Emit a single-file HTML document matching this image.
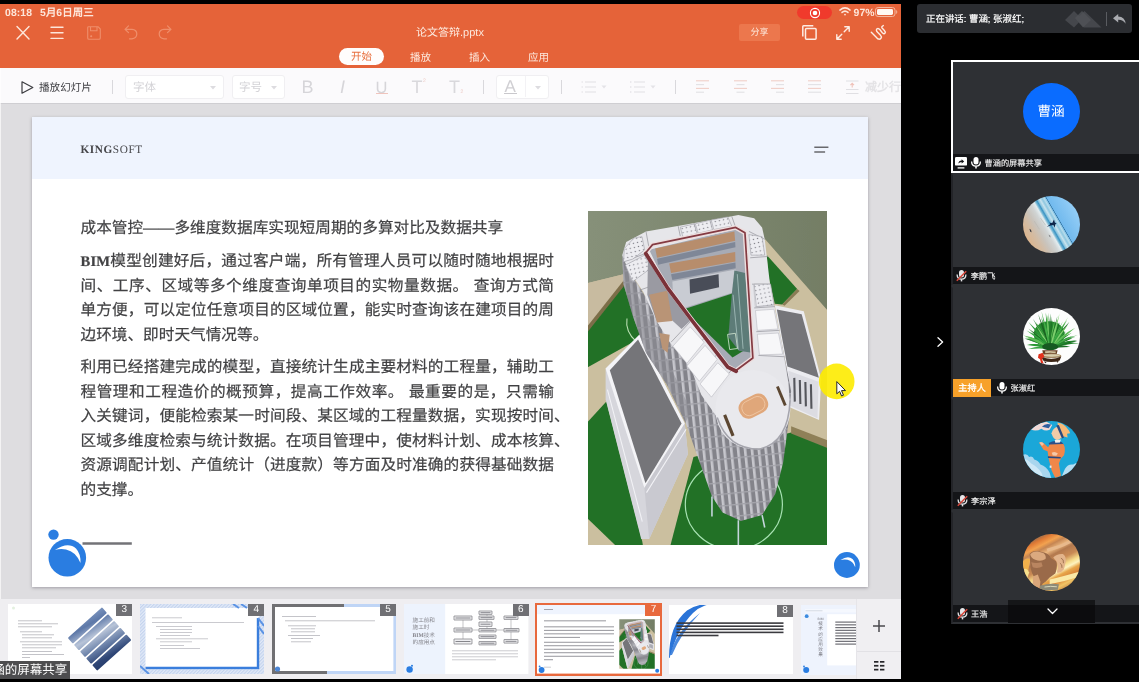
<!DOCTYPE html>
<html lang="zh-CN">
<head>
<meta charset="utf-8">
<title>论文答辩.pptx</title>
<style>
*{box-sizing:border-box;margin:0;padding:0}
html,body{width:1139px;height:682px;overflow:hidden;background:#000}
body{position:relative;font-family:"Liberation Sans",sans-serif;color:#fff;text-rendering:geometricPrecision}
.abs{position:absolute}
#wps,#talk,#plist{will-change:transform}
.nw{white-space:nowrap}
/* ---------- WPS (shared screen) ---------- */
#wps{position:absolute;left:0;top:4px;width:901px;height:675.4px;background:#dedde0;overflow:hidden}
#hdr{position:absolute;left:0;top:0;width:901px;height:64px;background:#e56339}
#tbar{position:absolute;left:0;top:64px;width:901px;height:36px;background:#fbfafc;border-bottom:1px solid #cfced2}
#slide{position:absolute;left:32px;top:113px;width:836.4px;height:470px;background:#fff;box-shadow:0 1px 3px rgba(100,98,108,.5)}
#shead{position:absolute;left:0;top:0;width:100%;height:62px;background:#eff4fe}
#strip{position:absolute;left:0;top:595px;width:901px;height:80px;background:#efeef1}

/* header */
#hdr .st{position:absolute;top:3.6px;font-size:10.4px;font-weight:bold;color:#fde6da;letter-spacing:.1px;line-height:11px;white-space:nowrap}
#hdr svg{position:absolute;overflow:visible}
#title{position:absolute;left:350px;width:200px;top:23.3px;text-align:center;font-size:11px;line-height:13px;color:#fdeadf;white-space:nowrap}
.tab{position:absolute;top:48.1px;font-size:10.5px;line-height:13px;color:#fdeadf;white-space:nowrap}
#tab1{position:absolute;left:339px;top:44px;width:45px;height:17px;border-radius:9px;background:#fffdfc;color:#e8703f;font-size:10.5px;line-height:19.4px;text-align:center}
#share{position:absolute;left:739px;top:20px;width:41px;height:17px;background:#ec774d;border-radius:2px;color:#fdeadf;font-size:9px;line-height:17px;text-align:center}
/* toolbar */
#tbar svg{position:absolute;overflow:visible}
#tbar .bx{position:absolute;top:7px;height:24px;background:#fff;border:1px solid #f0eff2;border-radius:3px}
#tbar .t{position:absolute;white-space:nowrap;line-height:14px}
#tbar .dv{position:absolute;top:12px;width:1px;height:14px;background:#d9d8dc}

/* slide content (coords relative to #slide: page x-32, y-117) */
#slide .ln{position:absolute;left:48.5px;width:473.5px;height:22px;font-size:15.65px;line-height:22px;color:#414143;-webkit-text-stroke:.2px #414143;white-space:nowrap;text-align:justify;text-align-last:justify;overflow:visible}
#slide .ln.l{text-align:left;text-align-last:left;width:auto}
#slide b.s{font-family:"Liberation Serif",serif;font-weight:bold;font-size:14.6px;letter-spacing:.15px}
#logo{position:absolute;left:48.5px;top:26.9px;font-family:"Liberation Serif",serif;font-size:11.3px;line-height:13px;color:#46464a;letter-spacing:.55px;white-space:nowrap}

/* thumbnails */
#strip svg{position:absolute;overflow:hidden}
.bdg{position:absolute;width:16px;height:12px;background:#707074;color:#fff;font-size:10px;line-height:12px;text-align:center}
#sharelbl{position:absolute;left:0;top:657px;width:70px;height:18.3px;background:#4d4d4f;color:#fff;font-size:12.5px;line-height:18.5px;white-space:nowrap;overflow:hidden}
#sharelbl span{position:absolute;left:-7.8px;top:0}
/* ---------- Meeting panel ---------- */
#talk span{position:absolute;left:9px;top:9.2px;font-size:9.45px;line-height:13px;color:#fff;-webkit-text-stroke:.2px #fff;white-space:nowrap}
#talk svg{position:absolute;overflow:visible}
.tile{position:absolute;left:0;width:189px;height:112.75px;background:#2e3034;border:2px solid #2e3034;border-left-color:#232428;border-right:0}
.tile.on{border-color:#fff}
.tile .nb{position:absolute;left:0;right:0;bottom:0;height:17px;background:#141518;font-size:8.2px;line-height:19.2px;color:#f2f2f2;white-space:nowrap}
.tile .nb svg{position:absolute;overflow:visible}
.tile .nb span{position:absolute;top:0;-webkit-text-stroke:.15px #f2f2f2}
.av{position:absolute;left:69.5px;top:20.8px;width:57px;height:57px;border-radius:50%;overflow:hidden}

#talk{position:absolute;left:917px;top:4px;width:215px;height:29px;background:#2b2d31;border-radius:3px}
#plist{position:absolute;left:950.6px;top:60.3px;width:189px;height:563.6px;background:#2d2f33;overflow:hidden}
</style>
</head>
<body>
<div id="wps">
  <div id="hdr">
    <span class="st" style="left:5px">08:18</span>
    <span class="st" style="left:40px">5月6日周三</span>
    <!-- close -->
    <svg style="left:16px;top:22px" width="14" height="14" viewBox="0 0 14 14" fill="none" stroke="#fde6da" stroke-width="1.4" stroke-linecap="round"><path d="M1 0.5 L13 13 M13 0.5 L1 13"/></svg>
    <!-- menu -->
    <svg style="left:50px;top:22px" width="14" height="14" viewBox="0 0 14 14" fill="none" stroke="#fde6da" stroke-width="1.4" stroke-linecap="round"><path d="M1 1.2 H13 M1 6.8 H13 M1 12.4 H13"/></svg>
    <!-- save (disabled) -->
    <svg style="left:87px;top:22px" width="14" height="14" viewBox="0 0 14 14" fill="none" stroke="#ef8e6b" stroke-width="1.1" stroke-linejoin="round"><path d="M1.5 0.7 H11 L13.3 3 V12 Q13.3 13.3 12 13.3 H2 Q0.7 13.3 0.7 12 V1.5 Q0.7 0.7 1.5 0.7 Z M3.5 0.7 V4.8 H10 V0.7"/><circle cx="4.2" cy="10.3" r=".5" fill="#ef8e6b"/></svg>
    <!-- undo (disabled) -->
    <svg style="left:124px;top:21px" width="14" height="15" viewBox="0 0 14 15" fill="none" stroke="#ef8e6b" stroke-width="1.2" stroke-linecap="round" stroke-linejoin="round"><path d="M4.5 0.8 L1 4.3 L4.5 7.6 M1.2 4.3 H8 Q12.8 4.6 12.8 9 Q12.6 13.4 8 13.8 H5.5"/></svg>
    <!-- redo (disabled) -->
    <svg style="left:158px;top:21px" width="14" height="15" viewBox="0 0 14 15" fill="none" stroke="#ef8e6b" stroke-width="1.2" stroke-linecap="round" stroke-linejoin="round"><path d="M9.5 0.8 L13 4.3 L9.5 7.6 M12.8 4.3 H6 Q1.2 4.6 1.2 9 Q1.4 13.4 6 13.8 H8.5"/></svg>
    <div id="title">论文答辩.pptx</div>
    <div id="tab1">开始</div>
    <span class="tab" style="left:410px">播放</span>
    <span class="tab" style="left:469px">插入</span>
    <span class="tab" style="left:528px">应用</span>
    <!-- recording pill -->
    <div class="abs" style="left:797px;top:2px;width:35px;height:12.5px;border-radius:7px;background:#f03a2c"></div>
    <svg style="left:809px;top:2.5px" width="12" height="12" viewBox="0 0 12 12"><circle cx="6" cy="6" r="4.6" fill="none" stroke="#fff" stroke-width="1.1"/><circle cx="6" cy="6" r="2.3" fill="#fff"/></svg>
    <!-- wifi -->
    <svg style="left:839px;top:3.3px" width="12" height="9" viewBox="0 0 12 9" fill="none" stroke="#fde6da" stroke-width="1.5" stroke-linecap="round"><path d="M0.9 3.1 Q6 -1.4 11.1 3.1"/><path d="M3 5.4 Q6 2.8 9 5.4"/><circle cx="6" cy="7.6" r=".9" fill="#fde6da" stroke="none"/></svg>
    <span class="st" style="left:853.5px">97%</span>
    <!-- battery -->
    <svg style="left:875px;top:2.9px" width="23" height="10" viewBox="0 0 23 10"><rect x=".5" y=".5" width="19.5" height="9" rx="2.6" fill="none" stroke="#f4b69d" stroke-width="1"/><rect x="2" y="2" width="16" height="6" rx="1.4" fill="#fff8f3"/><path d="M21.3 3.4 Q22.4 5 21.3 6.6" stroke="#f4b69d" stroke-width="1" fill="none"/></svg>
    <div id="share">分享</div>
    <!-- copy -->
    <svg style="left:802px;top:21px" width="15" height="15" viewBox="0 0 15 15" fill="none" stroke="#fdece3" stroke-width="1.5" stroke-linejoin="round"><path d="M0.8 11.5 V1.6 Q0.8 .8 1.6 .8 H11.3"/><rect x="3.5" y="3.4" width="10.6" height="10.8" rx="1"/></svg>
    <!-- expand -->
    <svg style="left:836px;top:21.5px" width="14" height="14" viewBox="0 0 14 14" fill="none" stroke="#fdece3" stroke-width="1.4" stroke-linecap="round" stroke-linejoin="round"><path d="M8.8 .8 H13.2 V5.2 M13 1 L8.2 5.8 M5.2 13.2 H.8 V8.8 M1 13 L5.8 8.2"/></svg>
    <!-- pen -->
    <svg style="left:871px;top:21px" width="15" height="15" viewBox="0 0 15 15" fill="none" stroke="#fdece3" stroke-width="1.4" stroke-linecap="round" stroke-linejoin="round"><path d="M.3 7.3 L6 13.1 Q8.4 15.2 10 13.2 Q11 11.8 9.3 10 L6.6 7.3 Q4.6 5 6 3.8 Q7.4 2.8 9 4.8 L11.3 7.8 Q13 9.6 14 8.2 Q14.8 6.8 13 5 L11 2.9 Q10.2 1.6 12.3 .6"/></svg>
  </div>
  <div id="tbar">
    <svg style="left:20.5px;top:12.6px" width="13" height="13" viewBox="0 0 13 13" fill="none" stroke="#3c3c40" stroke-width="1.2" stroke-linejoin="round"><path d="M1 .8 L11.8 6.5 L1 12.2 Z"/></svg>
    <span class="t" style="left:39px;top:13.4px;font-size:10.6px;color:#3f3f43">播放幻灯片</span>
    <div class="dv" style="left:112px"></div>
    <div class="bx" style="left:125px;width:99px"></div>
    <span class="t" style="left:133px;top:13.3px;font-size:11.5px;color:#d3d2d6">字体</span>
    <svg style="left:210px;top:17.5px" width="6" height="4" viewBox="0 0 6 4"><path d="M0 0 H6 L3 3.6 Z" fill="#dddce0"/></svg>
    <div class="bx" style="left:232px;width:53px"></div>
    <span class="t" style="left:239px;top:13.3px;font-size:11.5px;color:#d3d2d6">字号</span>
    <svg style="left:271px;top:17.5px" width="6" height="4" viewBox="0 0 6 4"><path d="M0 0 H6 L3 3.6 Z" fill="#dddce0"/></svg>
    <span class="t" style="left:301.5px;top:10px;font-size:18px;line-height:18px;color:#d6d5d9">B</span>
    <span class="t" style="left:340px;top:10px;font-size:18px;line-height:18px;color:#d6d5d9;font-style:italic">I</span>
    <span class="t" style="left:375.5px;top:10.5px;font-size:16.5px;line-height:18px;color:#d6d5d9">U</span>
    <div class="abs" style="left:375.5px;top:24.5px;width:12px;height:1px;background:#efc4bd"></div>
    <span class="t" style="left:411.5px;top:10px;font-size:18px;line-height:18px;color:#d9d8dc">T</span>
    <span class="t" style="left:423px;top:10px;font-size:5px;line-height:6px;color:#ecc9c3">2</span>
    <span class="t" style="left:449px;top:10px;font-size:18px;line-height:18px;color:#d9d8dc">T</span>
    <span class="t" style="left:460.5px;top:21px;font-size:5px;line-height:6px;color:#ecc9c3">2</span>
    <div class="dv" style="left:483px"></div>
    <div class="bx" style="left:496px;width:53px"></div>
    <div class="abs" style="left:525px;top:8px;width:1px;height:21px;background:#f3f2f5"></div>
    <span class="t" style="left:504.5px;top:9.5px;font-size:17px;line-height:18px;color:#d0cfd3">A</span>
    <div class="abs" style="left:504px;top:24.5px;width:13px;height:1.5px;background:#c9c8cc"></div>
    <svg style="left:535px;top:17.5px" width="6" height="4" viewBox="0 0 6 4"><path d="M0 0 H6 L3 3.6 Z" fill="#dddce0"/></svg>
    <div class="dv" style="left:561px"></div>
    <!-- bullet list -->
    <svg style="left:581px;top:12px" width="26" height="14" viewBox="0 0 26 14" stroke="#e1e0e4" stroke-width="1.2" fill="none"><path d="M4 2 H15 M4 7 H15 M4 12 H15"/><path d="M.5 2 H2 M.5 7 H2 M.5 12 H2"/><path d="M20.5 5.5 H25.5 L23 8.5 Z" fill="#e4e3e7" stroke="none"/></svg>
    <!-- numbered list -->
    <svg style="left:630px;top:12px" width="26" height="14" viewBox="0 0 26 14" stroke="#e1e0e4" stroke-width="1.2" fill="none"><path d="M4 2 H15 M4 7 H15 M4 12 H15"/><path d="M.8 1 V3 M.8 6 V8 M.8 11 V13" stroke-width=".9"/><path d="M20.5 5.5 H25.5 L23 8.5 Z" fill="#e4e3e7" stroke="none"/></svg>
    <div class="dv" style="left:675px"></div>
    <!-- align icons -->
    <svg style="left:696px;top:12.4px" width="14" height="13" viewBox="0 0 14 13" fill="none" stroke-width="1.1"><path d="M0 .8 H13" stroke="#f1cfc8"/><path d="M0 4.6 H8" stroke="#e2e1e5"/><path d="M0 8.4 H13" stroke="#f1cfc8"/><path d="M0 12.2 H8" stroke="#e2e1e5"/></svg>
    <svg style="left:734px;top:12.4px" width="14" height="13" viewBox="0 0 14 13" fill="none" stroke-width="1.1"><path d="M0 .8 H13" stroke="#f1cfc8"/><path d="M2.5 4.6 H10.5" stroke="#e2e1e5"/><path d="M0 8.4 H13" stroke="#f1cfc8"/><path d="M2.5 12.2 H10.5" stroke="#e2e1e5"/></svg>
    <svg style="left:771px;top:12.4px" width="14" height="13" viewBox="0 0 14 13" fill="none" stroke-width="1.1"><path d="M0 .8 H13" stroke="#f1cfc8"/><path d="M5 4.6 H13" stroke="#e2e1e5"/><path d="M0 8.4 H13" stroke="#f1cfc8"/><path d="M5 12.2 H13" stroke="#e2e1e5"/></svg>
    <svg style="left:808px;top:12.4px" width="14" height="13" viewBox="0 0 14 13" fill="none" stroke-width="1.1"><path d="M0 .8 H13" stroke="#f1cfc8"/><path d="M0 4.6 H13" stroke="#e2e1e5"/><path d="M0 8.4 H13" stroke="#f1cfc8"/><path d="M0 12.2 H13" stroke="#e2e1e5"/></svg>
    <svg style="left:846px;top:12px" width="13" height="15" viewBox="0 0 13 15" fill="none" stroke-width="1.1"><path d="M0 1 H12.5 M0 9.5 H12.5 M0 13.5 H12.5" stroke="#e0dfe3"/><path d="M6.2 7.5 V3.6 M4.4 5.2 L6.2 3.4 L8 5.2" stroke="#f0c2b9"/></svg>
    <span class="t" style="left:865px;top:12.2px;font-size:12px;color:#e4e3e6;font-weight:bold">减少行</span>
  </div>
  <div id="slide"><div id="shead"></div>
    <div id="logo"><b>KING</b>SOFT</div>
    <svg class="abs" style="left:782px;top:28px" width="16" height="10" viewBox="0 0 16 10" stroke="#68686d" stroke-width="1.4" fill="none"><path d="M.3 2.2 H14.4 M.3 7 H11.1"/></svg>
    <div class="ln" style="top:100.80px;width:422.6px">成本管控——多维度数据库实现短周期的多算对比及数据共享</div>
    <div class="ln" style="top:134.30px"><b class="s">BIM</b>模型创建好后，通过客户端，所有管理人员可以随时随地根据时</div>
    <div class="ln" style="top:158.75px">间、工序、区域等多个维度查询单项目的实物量数据。 查询方式简</div>
    <div class="ln" style="top:183.20px">单方便，可以定位任意项目的区域位置，能实时查询该在建项目的周</div>
    <div class="ln" style="top:207.65px;width:187.8px">边环境、即时天气情况等。</div>
    <div class="ln" style="top:240.45px">利用已经搭建完成的模型，直接统计生成主要材料的工程量，辅助工</div>
    <div class="ln" style="top:264.90px">程管理和工程造价的概预算，提高工作效率。 最重要的是，只需输</div>
    <div class="ln" style="top:289.35px;width:489.2px">入关键词，便能检索某一时间段、某区域的工程量数据，实现按时间、</div>
    <div class="ln" style="top:313.80px;width:489.2px">区域多维度检索与统计数据。在项目管理中，使材料计划、成本核算、</div>
    <div class="ln" style="top:338.25px">资源调配计划、产值统计（进度款）等方面及时准确的获得基础数据</div>
    <div class="ln" style="top:362.70px;width:62.6px">的支撑。</div>
    <svg class="abs" style="left:556px;top:94px" width="239" height="334" viewBox="0 0 239 334">
      <defs>
        <linearGradient id="gbg" x1="0" y1="0" x2="1" y2="0"><stop offset="0" stop-color="#87917a"/><stop offset="1" stop-color="#737d64"/></linearGradient>
        <pattern id="fac" width="26" height="44" patternUnits="userSpaceOnUse" patternTransform="rotate(-6)"><rect width="26" height="44" fill="#83838a"/><rect x="0" width="10" height="44" fill="#c6c6cc"/><rect y="0" width="26" height="5" fill="#a4a4ab"/></pattern>
        <pattern id="dots" width="16" height="16" patternUnits="userSpaceOnUse" patternTransform="rotate(-12)"><rect width="16" height="16" fill="#ededf1"/><circle cx="8" cy="8" r="2.6" fill="#77777f"/></pattern><filter id="soft" x="-2%" y="-2%" width="104%" height="104%"><feGaussianBlur stdDeviation="0.55"/></filter>
        <clipPath id="cimg"><rect width="239" height="334"/></clipPath>
      </defs>
      <g id="bld" clip-path="url(#cimg)"><g filter="url(#soft)"><g transform="translate(-8 -6) scale(.2639)">
        <rect x="0" y="0" width="970" height="1320" fill="url(#gbg)"/>
        <!-- beige ground -->
        <polygon points="20,298 165,262 430,160 700,128 940,402 940,1300 20,1300" fill="#cbbf9f"/>
        <polygon points="20,298 165,262 165,300 20,475" fill="#c8bba0"/>
        <!-- lawns -->
        <polygon points="20,482 168,296 232,500 215,512 20,620" fill="#227127"/>
        <polygon points="20,470 166,285 172,300 20,492" fill="#7d6e49"/>
        <path d="M178 430 Q170 480 215 520" stroke="#bfe3b6" stroke-width="4" fill="none"/>
        <polygon points="708,190 823,318 766,377 738,374 712,262" fill="#227127"/>
        <polygon points="823,318 766,377 775,382 832,326" fill="#8a7b55"/>
        <!-- lower lawns -->
        <polygon points="20,832 100,745 236,1275 240,1300 20,1300" fill="#227127"/>
        <polygon points="430,955 800,862 940,915 940,1300 340,1300" fill="#227127"/>
        <polygon points="800,838 940,892 940,922 800,866" fill="#8f8058"/>
        <polygon points="20,1180 145,1300 20,1300" fill="#cbbf9f"/>
        <ellipse cx="583" cy="1135" rx="184" ry="170" fill="none" stroke="#a9e3b4" stroke-width="4.5"/>
        <!-- right annex: white border, gray roof, columns facade -->
        <polygon points="738,380 848,403 914,660 906,815 792,765 782,615" fill="#ececf0"/>
        <polygon points="746,396 840,414 905,655 786,612" fill="#757579"/>
        <polygon points="790,628 904,670 900,808 794,760" fill="#dcdce2"/>
        <path d="M812 655 L814 745 M833 663 L835 754 M854 671 L856 763 M875 679 L877 772" stroke="#55565c" stroke-width="8"/>
        <!-- left annex -->
        <polygon points="97,620 97,736 232,1266 262,1266 409,944 397,828 226,491" fill="#d6d6dc"/>
        <polygon points="97,620 226,491 397,828 244,1072" fill="#f4f4f7"/>
        <polygon points="113,626 220,510 385,828 248,1054" fill="#757579"/>
        <polygon points="244,1072 397,828 409,944 262,1266" fill="#c9c9d0"/>
        <path d="M104 700 L236 1200 M252 1090 L402 850" stroke="#f2f2f6" stroke-width="4" fill="none"/>
        <!-- main building facade -->
        <polygon points="160,190 165,300 200,420 250,560 330,682 400,825 450,965 500,1105 540,1165 610,1197 690,1175 740,1095 770,975 790,825 800,705 760,500 420,620 180,240" fill="url(#fac)"/>
        <polygon points="160,190 165,300 200,420 250,560 330,682 400,825 420,780 300,520 200,300" fill="#8a8a91" opacity=".55"/>
        <path d="M500 1105 V1180 M600 1195 V1300 M690 1175 L700 1222" stroke="#c5d6dc" stroke-width="6"/>
        <!-- roof ring -->
        <polygon points="160,190 175,140 250,100 370,80 560,45 600,38 660,50 690,85 700,130 720,300 760,500 790,675 795,755 770,855 720,915 640,925 580,885 520,805 460,720 420,620 340,520 290,440 240,330 180,240" fill="#e6e6ea"/>
        <!-- roof slab lines -->
        <g stroke="#9c9ca3" stroke-width="3" fill="none">
          <path d="M372 80 L380 118 M432 68 L440 106 M492 57 L500 95 M575 43 L590 85"/>
          <path d="M250 100 L262 165 M165 215 L245 185 M190 262 L275 225 M228 322 L320 290"/>
          <path d="M640 100 L700 130 M645 200 L712 195 M652 300 L722 300 M660 390 L738 385 M668 480 L756 475 M676 570 L775 575"/>
          <path d="M345 520 L420 440 M395 590 L475 500 M440 650 L525 560 M490 720 L575 625"/>
        </g>
        <g fill="#f7f7f9" stroke="#b5b5bc" stroke-width="2">
          <polygon points="352,535 418,462 470,520 405,600"/>
          <polygon points="405,610 474,532 520,585 452,668"/>
          <polygon points="455,678 522,598 566,640 498,728"/>
          <polygon points="665,400 735,395 750,470 672,475"/>
          <polygon points="672,490 752,485 768,565 680,568"/>
          <polygon points="658,305 722,305 733,380 664,385"/>
        </g>
        <g fill="url(#dots)" stroke="#a5a5ad" stroke-width="2.5">
          <polygon points="380,84 432,72 444,108 390,122"/><polygon points="437,71 492,58 502,94 448,107"/><polygon points="497,57 560,45 575,80 507,93"/>
          <polygon points="168,165 205,125 235,120 245,170 200,205 165,215"/><polygon points="172,228 245,190 268,240 200,290"/>
          <polygon points="640,112 690,120 700,190 648,190"/><polygon points="660,300 722,300 735,378 668,385"/>
        </g>
        <!-- courtyard interior -->
        <polygon points="262,170 590,92 628,110 655,580 590,625 560,612 420,430 330,310" fill="#a7abb5"/>
        <polygon points="285,165 585,100 588,135 292,200" fill="#b78d6c"/>
        <polygon points="292,204 588,140 589,160 296,226" fill="#7f8797"/>
        <polygon points="338,222 588,178 589,214 345,258" fill="#b78d6c"/>
        <polygon points="345,262 589,218 590,240 350,284" fill="#7f8797"/>
        <polygon points="350,290 590,244 585,330 400,388 352,330" fill="#c9ccd3"/>
        <polygon points="415,282 525,262 527,312 417,336" fill="#4a4e58"/>
        <polygon points="258,185 330,305 400,390 425,432 385,470 330,420 290,440 255,340" fill="#9a9aa2"/>
        <polygon points="262,340 330,325 350,440 292,445" fill="#b99476"/>
        <polygon points="300,485 340,492 332,560 312,545" fill="#b99476"/>
        <polygon points="402,392 580,334 640,540 578,578 425,428" fill="#227127"/>
        <polygon points="585,248 626,258 652,560 602,552 562,500 576,330" fill="#5d7b78"/>
        <path d="M596 262 L618 545 M580 340 L600 548" stroke="#a9c3bf" stroke-width="3"/>
        <rect x="563" y="488" width="30" height="58" fill="none" stroke="#cfe3cf" stroke-width="3" transform="rotate(-8 578 517)"/>
        <!-- red parapet -->
        <polygon points="250,180 275,150 590,85 625,105 655,580 590,628 560,612 420,430 330,310" fill="none" stroke="#eddede" stroke-width="17" stroke-linejoin="round"/>
        <polygon points="250,180 275,150 590,85 625,105 655,580 590,628 560,612 420,430 330,310" fill="none" stroke="#843a43" stroke-width="6.5" stroke-linejoin="round"/>
        <path d="M249 184 L330 312 L420 432 L560 614 L592 630" fill="none" stroke="#7a3039" stroke-width="14" stroke-linejoin="round" stroke-linecap="round"/>
        <!-- drum roof -->
        <ellipse cx="655" cy="775" rx="142" ry="150" fill="#e9e9ed"/>
        <rect x="600" y="724" width="114" height="76" rx="34" fill="#e0a77a" transform="rotate(-27 657 762)"/><rect x="612" y="734" width="90" height="56" rx="26" fill="none" stroke="#f0c9a6" stroke-width="3" transform="rotate(-27 657 762)"/>
        <path d="M548 795 L580 875" stroke="#5b4630" stroke-width="12"/>
        <path d="M748 688 L778 760" stroke="#5b4630" stroke-width="11"/>
        <path d="M520 805 Q560 925 680 925 Q790 900 796 740" stroke="#a5a5ad" stroke-width="6" fill="none"/>
      </g></g></g>
    </svg>
    <!-- cursor highlight -->
    <svg class="abs" style="left:786px;top:246px;overflow:visible" width="38" height="38" viewBox="0 0 38 38"><circle cx="18.7" cy="18.4" r="17.8" fill="rgba(253,235,0,.9)"/><path d="M18.8 18.6 V30.8 L21.6 28.3 L23.6 33 L25.5 32.2 L23.5 27.6 H27.5 Z" fill="#fff" stroke="#2a2a2a" stroke-width="1" stroke-linejoin="round"/></svg>
    <!-- decorations -->
    <svg class="abs" style="left:14px;top:410px" width="90" height="54" viewBox="0 0 90 54">
      <path d="M36.5 16.5 H85.8" stroke="#737377" stroke-width="2.3"/>
      <circle cx="7.5" cy="7.6" r="5.2" fill="#2a7de1"/>
      <circle cx="21.3" cy="30.8" r="18.8" fill="#2a7de1"/>
      <path d="M8.9 23 Q22 14.3 30 21.5 Q35 27 34.5 36.1 Q30 24.5 20 22.4 Q14 21.4 8.9 23 Z" fill="#fff"/>
    </svg>
    <svg class="abs" style="left:801px;top:434px" width="28" height="28" viewBox="0 0 28 28">
      <circle cx="13.9" cy="14" r="12.9" fill="#2a7de1"/>
      <path d="M7.5 9.1 Q15 3.8 19.5 8 Q22.6 11.5 22.2 16.2 Q20 10 14.5 8.8 Q11 8.2 7.5 9.1 Z" fill="#fff"/>
    </svg>
  </div>
  <div class="abs" style="left:0;top:64px;width:1.2px;height:593px;background:rgba(255,255,255,.65)"></div>
  <div id="strip">
    <svg style="left:8px;top:5.3px" width="124.4" height="70" viewBox="0 0 124.4 70"><defs><linearGradient id="mtn" x1="0" y1="0" x2=".6" y2="1"><stop offset="0" stop-color="#c9d6ea"/><stop offset=".22" stop-color="#8fa6cc"/><stop offset=".4" stop-color="#5d78a8"/><stop offset=".55" stop-color="#b8c4d8"/><stop offset=".7" stop-color="#6e84ab"/><stop offset=".85" stop-color="#2f4676"/><stop offset="1" stop-color="#1f3563"/></linearGradient><clipPath id="dia" transform="translate(91.6 35) rotate(-42)"><rect x="-23" y="-22" width="46" height="7.6" rx="1"/><rect x="-23" y="-12.9" width="46" height="7.6" rx="1"/><rect x="-23" y="-3.8" width="46" height="7.6" rx="1"/><rect x="-23" y="5.3" width="46" height="7.6" rx="1"/><rect x="-23" y="14.4" width="46" height="7.6" rx="1"/></clipPath></defs><rect width="124.4" height="70" fill="#fff"/><rect x="50" y="0" width="74.4" height="70" fill="url(#mtn)" clip-path="url(#dia)"/><rect x="4" y="2.5" width="3" height="3" rx="1.5" fill="#e3f0df"/><rect x="10" y="16.5" width="24" height="0.7" fill="#a9a9b0"/><rect x="10" y="19.5" width="40" height="0.7" fill="#a9a9b0"/><rect x="10" y="22.5" width="34" height="0.7" fill="#a9a9b0"/><rect x="12" y="27.5" width="22" height="0.7" fill="#a9a9b0"/><rect x="14" y="30.5" width="32" height="0.7" fill="#a9a9b0"/><rect x="14" y="33.5" width="30" height="0.7" fill="#a9a9b0"/><rect x="12" y="37.5" width="42" height="0.7" fill="#a9a9b0"/><rect x="14" y="40.5" width="40" height="0.7" fill="#a9a9b0"/><rect x="14" y="43.5" width="34" height="0.7" fill="#a9a9b0"/><rect x="14" y="47" width="30" height="0.7" fill="#a9a9b0"/><rect x="14" y="50" width="42" height="0.7" fill="#a9a9b0"/><rect x="14" y="53" width="8" height="0.7" fill="#a9a9b0"/></svg><div class="bdg" style="left:116.4px;top:5.3px">3</div>
    <svg style="left:140.3px;top:5.3px" width="124" height="70" viewBox="0 0 124 70"><defs><pattern id="hat" width="2.4" height="2.4" patternUnits="userSpaceOnUse" patternTransform="rotate(45)"><rect width="2.4" height="2.4" fill="#e1e9f7"/><rect width="1.1" height="2.4" fill="#c3d3ee"/></pattern></defs><rect width="124" height="70" fill="url(#hat)"/><rect x="5.5" y="4" width="113.5" height="61.5" fill="#fff"/><path d="M5.5 64 H119 M118 14 V65" stroke="#3a7edc" stroke-width="2.4" fill="none"/><path d="M93 0 l6 4 M101 0 l6 4 M0 62 l9 8 M118 14 l6 8 M118 22 l6 8" stroke="#5b93e4" stroke-width="2"/><rect x="12" y="13.5" width="30" height="0.7" fill="#b3b3ba"/><rect x="12" y="18" width="92" height="0.7" fill="#b3b3ba"/><rect x="16" y="22" width="36" height="0.7" fill="#b3b3ba"/><rect x="20" y="25" width="32" height="0.7" fill="#b3b3ba"/><rect x="20" y="28" width="32" height="0.7" fill="#b3b3ba"/><rect x="20" y="31" width="30" height="0.7" fill="#b3b3ba"/><rect x="16" y="34.5" width="52" height="0.7" fill="#b3b3ba"/><rect x="20" y="37.5" width="32" height="0.7" fill="#b3b3ba"/><rect x="20" y="41" width="24" height="0.7" fill="#b3b3ba"/><rect x="20" y="44" width="40" height="0.7" fill="#b3b3ba"/></svg><div class="bdg" style="left:248.3px;top:5.3px">4</div>
    <svg style="left:271.6px;top:5.3px" width="124.4" height="70" viewBox="0 0 124.4 70"><rect width="124.4" height="70" fill="#bfd5f6"/><path d="M0 0 H72 V3 H3 V67 H55 V70 H0 Z" fill="#707073"/><rect x="3" y="3" width="118.4" height="64" fill="#fff"/><circle cx="5.5" cy="65" r="2.6" fill="#4c86d6"/><rect x="10" y="12" width="34" height="0.7" fill="#ababb2"/><rect x="13" y="16.5" width="90" height="0.7" fill="#ababb2"/><rect x="16" y="21.5" width="28" height="0.7" fill="#ababb2"/><rect x="19" y="24.5" width="24" height="0.7" fill="#ababb2"/><rect x="19" y="27.5" width="24" height="0.7" fill="#ababb2"/><rect x="16" y="31" width="32" height="0.7" fill="#ababb2"/><rect x="19" y="34" width="22" height="0.7" fill="#ababb2"/><rect x="19" y="37.5" width="20" height="0.7" fill="#ababb2"/></svg><div class="bdg" style="left:380px;top:5.3px">5</div>
    <svg style="left:404.4px;top:5.3px" width="124.4" height="70" viewBox="0 0 124.4 70"><rect width="124.4" height="70" fill="#fff"/><rect width="41.2" height="70" fill="#edf3fd"/><g font-family="Liberation Sans, sans-serif" font-size="5.6" fill="#85858c"><text x="8.6" y="18">施工前和</text><text x="8.6" y="25.2">施工时</text><text x="8.6" y="32.6" font-family="Liberation Serif, serif" font-weight="bold">BIM<tspan font-family="Liberation Sans, sans-serif" font-weight="normal">技术</tspan></text><text x="8.6" y="39.8">的应用点</text></g><circle cx="5.6" cy="65.5" r="3.2" fill="#2a7de1"/><circle cx="8" cy="61.8" r="1" fill="#2a7de1"/><g fill="#f1f1f3" stroke="#5f5f66" stroke-width=".6"><rect x="50" y="12" width="18" height="4" rx=".2"/><path d="M51.5 14.0 H66.5" stroke="#55555b" stroke-width=".7"/><rect x="50" y="24" width="18" height="4" rx=".2"/><path d="M51.5 26.0 H66.5" stroke="#55555b" stroke-width=".7"/><rect x="50" y="35" width="18" height="5" rx=".2"/><path d="M51.5 37.5 H66.5" stroke="#55555b" stroke-width=".7"/><rect x="75" y="7" width="13" height="3.4" rx=".2"/><path d="M76.5 8.7 H86.5" stroke="#55555b" stroke-width=".7"/><rect x="75" y="12" width="15" height="3.4" rx=".2"/><path d="M76.5 13.7 H88.5" stroke="#55555b" stroke-width=".7"/><rect x="75" y="18" width="13" height="4.4" rx=".2"/><path d="M76.5 20.2 H86.5" stroke="#55555b" stroke-width=".7"/><rect x="75" y="24.5" width="17" height="3.4" rx=".2"/><path d="M76.5 26.2 H90.5" stroke="#55555b" stroke-width=".7"/><rect x="75" y="31" width="17" height="3.4" rx=".2"/><path d="M76.5 32.7 H90.5" stroke="#55555b" stroke-width=".7"/><rect x="75" y="37.5" width="17" height="3.4" rx=".2"/><path d="M76.5 39.2 H90.5" stroke="#55555b" stroke-width=".7"/><rect x="100" y="12" width="14" height="3.4" rx=".2"/><path d="M101.5 13.7 H112.5" stroke="#55555b" stroke-width=".7"/><rect x="100" y="24.5" width="15" height="3.4" rx=".2"/><path d="M101.5 26.2 H113.5" stroke="#55555b" stroke-width=".7"/><rect x="100" y="35.5" width="14" height="3.6" rx=".2"/><path d="M101.5 37.3 H112.5" stroke="#55555b" stroke-width=".7"/></g><path d="M59 16 V24 M59 28 V35 M68 26 H75 M92 26 H100 M83 10.4 V12 M83 15.4 V18 M83 22.4 V24.5 M107 15.4 V24.5 M107 28 V35.5" stroke="#8a8a90" stroke-width=".5" fill="none"/><rect x="48" y="46.5" width="66" height="0.7" fill="#b5b5bb"/><rect x="48" y="49.5" width="66" height="0.7" fill="#b5b5bb"/><rect x="48" y="52.5" width="66" height="0.7" fill="#b5b5bb"/><rect x="48" y="55.5" width="44" height="0.7" fill="#b5b5bb"/></svg><div class="bdg" style="left:512.8px;top:5.3px">6</div>
    <div class="abs" style="left:534.7px;top:4px;width:127.6px;height:73px;background:#e8693d"></div><svg style="left:536.9px;top:6.2px" width="123.2" height="68.6" viewBox="0 0 123.2 68.6"><rect width="123.2" height="68.6" fill="#fff"/><rect width="123.2" height="9.2" fill="#eff4fe"/><rect x="7" y="4" width="9" height=".9" fill="#9a9aa2"/><rect x="7" y="15.4" width="62" height="0.9" fill="#8b8b92"/><rect x="7" y="21.4" width="70" height="0.9" fill="#8b8b92"/><rect x="7" y="24.9" width="70" height="0.9" fill="#8b8b92"/><rect x="7" y="28.4" width="70" height="0.9" fill="#8b8b92"/><rect x="7" y="31.9" width="36" height="0.9" fill="#8b8b92"/><rect x="7" y="36.8" width="70" height="0.9" fill="#8b8b92"/><rect x="7" y="40.3" width="70" height="0.9" fill="#8b8b92"/><rect x="7" y="43.8" width="70" height="0.9" fill="#8b8b92"/><rect x="7" y="47.3" width="70" height="0.9" fill="#8b8b92"/><rect x="7" y="50.8" width="70" height="0.9" fill="#8b8b92"/><rect x="7" y="54.3" width="9" height="0.9" fill="#8b8b92"/><svg x="82.3" y="14.2" width="35.5" height="49.6" viewBox="0 0 239 334" preserveAspectRatio="none"><use href="#bld"/></svg><circle cx="4.6" cy="65" r="2.9" fill="#2a7de1"/><circle cx="2.6" cy="61.4" r=".9" fill="#2a7de1"/><path d="M7 62.2 H14" stroke="#9a9aa0" stroke-width=".5"/><circle cx="120.2" cy="65.8" r="2" fill="#2a7de1"/></svg><div class="bdg" style="left:645px;top:4px;width:17.3px;height:13px;line-height:13px;background:#e8693d">7</div>
    <svg style="left:668.7px;top:5.8px" width="124.3" height="69.4" viewBox="0 0 124.3 69.4"><rect width="124.3" height="69.4" fill="#fff"/><path d="M0 53 Q0 20 18 5.5 Q27 -1 41 -1 L36 .5 Q29 3 24 8 Q8 24 .6 53 Z" fill="#2a74d8"/><path d="M1 50 Q6 28 31 8 Q12 28 3 50 Z" fill="#2a74d8" opacity=".85"/><rect x="7.5" y="17.3" width="107" height="1.6" fill="#3a3a3f"/><rect x="7.5" y="20.4" width="107" height="1.6" fill="#3a3a3f"/><rect x="7.5" y="23.5" width="107" height="1.6" fill="#3a3a3f"/><rect x="7.5" y="26.6" width="107" height="1.6" fill="#3a3a3f"/><rect x="7.5" y="29.7" width="42" height="1.6" fill="#3a3a3f"/></svg><div class="bdg" style="left:777px;top:5.8px">8</div>
    <svg style="left:800.8px;top:5.6px" width="55.5" height="70" viewBox="0 0 55.5 70"><rect width="55.5" height="70" fill="#eef3fd"/><rect x="4" y="4" width="51.5" height="3.4" fill="#f5f8fe"/><rect x="26.2" y="9.2" width="29.3" height="51.2" fill="#fff"/><circle cx="5.7" cy="11.2" r="1.9" fill="#3b8be0"/><circle cx="5.2" cy="65" r="3" fill="#2a7de1"/><circle cx="3" cy="61.5" r=".9" fill="#2a7de1"/><rect x="4.5" y="5.5" width="17" height=".7" fill="#c5cbd6"/><g font-family="Liberation Sans, sans-serif" font-size="4.6" fill="#7a7a82" text-anchor="middle"><text x="19.6" y="14.5" font-size="3.4">BIM</text><text x="19.6" y="20.3">技</text><text x="19.6" y="25.4">术</text><text x="19.6" y="30.5">的</text><text x="19.6" y="35.6">应</text><text x="19.6" y="40.7">用</text><text x="19.6" y="45.8">效</text><text x="19.6" y="50.9">果</text></g><rect x="34.3" y="16.5" width="21.2" height="1.2" fill="#6f6f76"/><rect x="34.3" y="19.25" width="21.2" height="1.2" fill="#6f6f76"/><rect x="34.3" y="22.0" width="21.2" height="1.2" fill="#6f6f76"/><rect x="34.3" y="24.75" width="21.2" height="1.2" fill="#6f6f76"/><rect x="34.3" y="27.5" width="21.2" height="1.2" fill="#6f6f76"/><rect x="34.3" y="30.25" width="21.2" height="1.2" fill="#6f6f76"/><rect x="34.3" y="33.0" width="21.2" height="1.2" fill="#6f6f76"/><rect x="34.3" y="35.75" width="21.2" height="1.2" fill="#6f6f76"/><rect x="34.3" y="38.5" width="21.2" height="1.2" fill="#6f6f76"/></svg>
    <div class="abs" style="left:856.3px;top:0;width:44.7px;height:80px;background:#f0eff2;border-left:1px solid #e6e5e9"></div><div class="abs" style="left:857px;top:52px;width:44px;height:1px;background:#e2e1e5"></div><svg style="left:873px;top:21px;overflow:visible" width="12" height="12" viewBox="0 0 12 12"><path d="M6 0 V12 M0 6 H12" stroke="#4a4a4e" stroke-width="1.5"/></svg><svg style="left:874px;top:62px;overflow:visible" width="11" height="10" viewBox="0 0 11 10" fill="#26262a"><rect x="0" y="0" width="4.4" height="1.7"/><rect x="6" y="0" width="4.4" height="1.7"/><rect x="0" y="3.9" width="4.4" height="1.7"/><rect x="6" y="3.9" width="4.4" height="1.7"/><rect x="0" y="7.8" width="4.4" height="1.7"/><rect x="6" y="7.8" width="4.4" height="1.7"/></svg>
  </div>
  <div id="sharelbl"><span>涵的屏幕共享</span></div>
</div>
<div id="talk"><span>正在讲话: 曹涵; 张淑红;</span>
  <svg style="left:148px;top:7px" width="37" height="17" viewBox="0 0 37 17"><path d="M0 9 L9 0 L17 8 L9 16.5 Z M11 8.5 L19.5 0 L36.5 16.5 H19 Z" fill="#45474c"/><path d="M10 7 L17 0 L26 9 L18 16.5 Z" fill="#505257" opacity=".8"/></svg>
  <div class="abs" style="left:189px;top:8px;width:1px;height:14px;background:#5a5c61"></div>
  <svg style="left:196px;top:10px" width="13" height="10" viewBox="0 0 13 10"><path d="M5.2 0 L0 4.2 L5.2 8.4 V5.8 Q10 5.6 12.6 9.8 Q12 3 5.2 2.6 Z" fill="#a9abb0"/></svg>
</div>
<div id="plist">
  <div class="tile on" style="top:0.00px">
    <div class="av" style="background:#0a6cff;color:#fff;font-size:13.6px;line-height:57px;text-align:center">曹涵</div>
    <div class="nb">
      <svg style="left:2px;top:3px" width="12" height="12" viewBox="0 0 12 12"><rect x="0" y="0" width="12" height="8.6" rx="1.2" fill="#fff"/><path d="M3.4 6.6 Q3.6 3.8 6.6 3.6 V2.2 L9.2 4.4 L6.6 6.4 V5 Q4.6 5 3.4 6.6 Z" fill="#141518"/><path d="M2.6 10.9 H9.4" stroke="#fff" stroke-width="1.3"/></svg>
      <svg style="left:18px;top:3px" width="10" height="12" viewBox="0 0 10 12"><rect x="2.5" y="0" width="5" height="7.6" rx="2.5" fill="#fff"/><path d="M.6 4.6 Q.6 9.2 5 9.2 Q9.4 9.2 9.4 4.6" fill="none" stroke="#fff" stroke-width="1.3"/><path d="M5 9.2 V11.4" stroke="#fff" stroke-width="1.5"/></svg>
      <span style="left:31.5px">曹涵的屏幕共享</span>
    </div>
  </div>
  <div class="tile" style="top:112.75px">
    <div class="av"><svg viewBox="70 55 556 556" width="57" height="57" style="display:block"><defs><linearGradient id="bch" gradientUnits="userSpaceOnUse" x1="106" y1="472" x2="588" y2="194">
<stop offset="0" stop-color="#dcb58e"/><stop offset=".15" stop-color="#d3bca4"/><stop offset=".26" stop-color="#c9c4bd"/><stop offset=".367" stop-color="#d0d4d4"/><stop offset=".43" stop-color="#e3ecef"/><stop offset=".462" stop-color="#6fb4d2"/><stop offset=".489" stop-color="#3b93c4"/><stop offset=".51" stop-color="#8cc6df"/><stop offset=".547" stop-color="#c9e3ee"/><stop offset=".583" stop-color="#8ec7e0"/><stop offset=".619" stop-color="#b9ddec"/><stop offset=".645" stop-color="#7dbfe3"/><stop offset=".655" stop-color="#2f6f9f"/><stop offset=".667" stop-color="#72baee"/><stop offset="1" stop-color="#93cdf6"/></linearGradient><filter id="b2"><feGaussianBlur stdDeviation="3"/></filter></defs>
<rect x="70" y="55" width="556" height="556" fill="url(#bch)"/>
<g filter="url(#b2)"><path d="M372 285 L382 315 L398 318 L385 332 L380 362 L366 338 L330 345 L300 358 L335 330 L330 315 L355 318 Z" fill="#10254a"/><path d="M132 375 L148 385 L155 412 L140 400 Z" fill="#3a3a40"/><path d="M320 430 l15 10 l5 20 l-14 -8 Z" fill="#8d8f90"/><path d="M240 270 L290 340 M180 300 L230 380" stroke="#b9b7b0" stroke-width="6"/></g></svg></div>
    <div class="nb"><svg style="left:2.8px;top:3px" width="11" height="12" viewBox="0 0 11 12"><rect x="3" y="0" width="5" height="7.6" rx="2.5" fill="#e6e6e8"/><path d="M1.1 4.6 Q1.1 9.2 5.5 9.2 Q9.9 9.2 9.9 4.6" fill="none" stroke="#e6e6e8" stroke-width="1.3"/><path d="M5.5 9.2 V11.4" stroke="#e6e6e8" stroke-width="1.5"/><path d="M.8 10.8 L10.2 1.2" stroke="#d8463a" stroke-width="1.5"/></svg><span style="left:17.8px">李鹏飞</span></div>
  </div>
  <div class="tile" style="top:225.50px">
    <div class="av"><svg viewBox="70 55 556 556" width="57" height="57" style="display:block"><defs><filter id="b3"><feGaussianBlur stdDeviation="2"/></filter></defs><rect x="70" y="55" width="556" height="556" fill="#fdfdfd"/>
<g filter="url(#b3)">
<ellipse cx="325" cy="310" rx="150" ry="125" fill="#25852e"/>
<path d="M329 451 Q295 277 291 100 Q332 272 341 449 Z" fill="#2c9836"/><path d="M329 451 Q304 291 306 129 Q337 288 341 449 Z" fill="#5cbb55"/><path d="M331 454 Q234 364 150 293 Q251 346 339 446 Z" fill="#2a9434"/><path d="M329 448 Q368 312 428 191 Q395 321 341 452 Z" fill="#1a6421"/><path d="M330 453 Q241 301 166 160 Q261 289 340 447 Z" fill="#207a2a"/><path d="M330 447 Q412 282 509 145 Q432 293 340 453 Z" fill="#7fcf6e"/><path d="M333 444 Q454 374 584 381 Q465 402 337 456 Z" fill="#2a9434"/><path d="M329 448 Q361 314 416 193 Q390 323 341 452 Z" fill="#34a33e"/><path d="M329 450 Q334 306 356 164 Q358 308 341 450 Z" fill="#2c9836"/><path d="M330 454 Q258 376 208 300 Q285 355 340 446 Z" fill="#207a2a"/><path d="M329 451 Q306 279 302 106 Q331 276 341 449 Z" fill="#7fcf6e"/><path d="M329 450 Q331 292 351 135 Q355 293 341 450 Z" fill="#1c6f25"/><path d="M330 448 Q385 307 457 186 Q406 317 340 452 Z" fill="#44ad48"/><path d="M333 444 Q476 377 624 399 Q483 405 337 456 Z" fill="#268a30"/><path d="M331 445 Q433 345 546 296 Q447 362 339 455 Z" fill="#268a30"/><path d="M330 453 Q250 323 197 194 Q282 306 340 447 Z" fill="#44ad48"/><path d="M332 455 Q203 389 85 353 Q217 360 338 445 Z" fill="#1a6421"/><path d="M329 452 Q281 305 256 158 Q310 297 341 448 Z" fill="#268a30"/><path d="M333 444 Q462 367 600 371 Q473 395 337 456 Z" fill="#1c6f25"/><path d="M333 456 Q225 421 122 413 Q232 393 337 444 Z" fill="#44ad48"/><path d="M332 445 Q436 363 552 351 Q451 392 338 455 Z" fill="#1c6f25"/><path d="M333 444 Q446 388 563 398 Q452 408 337 456 Z" fill="#207a2a"/><path d="M332 455 Q211 390 99 356 Q223 365 338 445 Z" fill="#34a33e"/><path d="M331 446 Q401 350 486 291 Q420 367 339 454 Z" fill="#207a2a"/><path d="M332 455 Q227 392 129 358 Q237 373 338 445 Z" fill="#1a6421"/><path d="M333 444 Q460 373 594 378 Q469 397 337 456 Z" fill="#1c6f25"/><path d="M332 455 Q231 393 146 345 Q250 363 338 445 Z" fill="#268a30"/><path d="M332 455 Q237 402 157 362 Q255 373 338 445 Z" fill="#44ad48"/><path d="M331 446 Q402 356 488 306 Q421 374 339 454 Z" fill="#7fcf6e"/><path d="M329 449 Q339 305 379 167 Q375 310 341 451 Z" fill="#5cbb55"/><path d="M330 447 Q413 297 522 191 Q444 318 340 453 Z" fill="#1c6f25"/><path d="M332 455 Q223 388 131 337 Q242 358 338 445 Z" fill="#2a9434"/><path d="M331 454 Q250 367 180 295 Q265 353 339 446 Z" fill="#5cbb55"/><path d="M333 444 Q463 373 599 382 Q472 399 337 456 Z" fill="#1c6f25"/><path d="M330 453 Q251 327 193 205 Q278 312 340 447 Z" fill="#207a2a"/><path d="M329 452 Q280 294 245 137 Q301 288 341 448 Z" fill="#207a2a"/><path d="M332 455 Q196 376 76 323 Q215 343 338 445 Z" fill="#5cbb55"/><path d="M331 454 Q246 371 181 295 Q270 349 339 446 Z" fill="#5cbb55"/><path d="M330 446 Q397 343 487 284 Q425 367 340 454 Z" fill="#2a9434"/><path d="M330 453 Q252 332 194 218 Q276 318 340 447 Z" fill="#7fcf6e"/><path d="M329 449 Q353 287 405 135 Q387 294 341 451 Z" fill="#207a2a"/><path d="M329 452 Q262 284 218 117 Q290 274 341 448 Z" fill="#1a6421"/><path d="M329 450 Q317 277 320 102 Q338 276 341 450 Z" fill="#2a9434"/><path d="M331 454 Q248 377 176 316 Q263 361 339 446 Z" fill="#1c6f25"/><path d="M332 445 Q453 357 582 336 Q464 378 338 455 Z" fill="#207a2a"/><path d="M330 454 Q257 366 201 285 Q280 349 340 446 Z" fill="#2a9434"/><path d="M330 446 Q408 314 507 222 Q434 333 340 454 Z" fill="#7fcf6e"/><path d="M331 454 Q221 345 125 258 Q238 327 339 446 Z" fill="#1c6f25"/><path d="M332 445 Q437 356 554 328 Q452 378 338 455 Z" fill="#268a30"/><path d="M329 451 Q291 319 279 183 Q323 312 341 449 Z" fill="#2c9836"/><path d="M329 451 Q279 271 251 89 Q307 264 341 449 Z" fill="#44ad48"/><path d="M329 448 Q366 273 427 109 Q396 281 341 452 Z" fill="#7fcf6e"/><path d="M330 454 Q217 314 123 191 Q240 296 340 446 Z" fill="#2c9836"/><path d="M331 455 Q212 351 105 275 Q228 331 339 445 Z" fill="#34a33e"/><path d="M332 455 Q208 381 92 342 Q219 360 338 445 Z" fill="#5cbb55"/><path d="M334 456 Q217 423 107 415 Q225 389 336 444 Z" fill="#2c9836"/><path d="M331 446 Q446 314 580 247 Q470 340 339 454 Z" fill="#5cbb55"/><path d="M332 445 Q463 346 603 318 Q475 367 338 455 Z" fill="#44ad48"/><path d="M333 444 Q453 373 581 374 Q462 395 337 456 Z" fill="#268a30"/><path d="M334 444 Q431 405 532 435 Q436 433 336 456 Z" fill="#1c6f25"/><path d="M335 456 Q227 444 121 456 Q229 411 335 444 Z" fill="#34a33e"/><path d="M329 450 Q318 280 335 110 Q352 280 341 450 Z" fill="#207a2a"/><path d="M330 447 Q405 294 500 172 Q430 308 340 453 Z" fill="#34a33e"/>
<ellipse cx="335" cy="432" rx="78" ry="36" fill="#185a20"/>
<path d="M258 468 H408 L398 505 H268 Z" fill="#6b4226"/>
<path d="M285 478 Q330 470 390 480 L388 496 Q330 488 287 496 Z" fill="#cdbf9c"/>
<ellipse cx="345" cy="522" rx="100" ry="24" fill="#a48b66"/>
<ellipse cx="350" cy="518" rx="80" ry="12" fill="#d9cfae"/>
<path d="M247 528 Q345 575 443 528 L428 566 Q345 598 266 566 Z" fill="#3d2616"/>
<path d="M275 575 l12 18 l14 -12 Z M395 575 l10 14 l14 -16 Z" fill="#2d1a0e"/>
<path d="M222 505 L262 492 L278 528 L255 552 L272 602 L246 592 L236 555 L216 540 Z" fill="#e2331f"/>
</g></svg></div>
    <div class="nb"><div class="abs" style="left:.3px;top:.2px;width:37.6px;height:17.3px;background:#f7a12a;color:#fff;font-size:9px;text-align:center;letter-spacing:.3px;line-height:19.6px;-webkit-text-stroke:.3px #fff">主持人</div><svg style="left:43.5px;top:3px" width="10" height="12" viewBox="0 0 10 12"><rect x="2.5" y="0" width="5" height="7.6" rx="2.5" fill="#fff"/><path d="M.6 4.6 Q.6 9.2 5 9.2 Q9.4 9.2 9.4 4.6" fill="none" stroke="#fff" stroke-width="1.3"/><path d="M5 9.2 V11.4" stroke="#fff" stroke-width="1.5"/></svg><span style="left:57.5px">张淑红</span></div>
  </div>
  <div class="tile" style="top:338.25px">
    <div class="av"><svg viewBox="70 55 556 556" width="57" height="57" style="display:block"><defs><filter id="b4"><feGaussianBlur stdDeviation="2.5"/></filter></defs><rect x="70" y="55" width="556" height="556" fill="#1ba7d8"/>
<g filter="url(#b4)">
<path d="M70 385 Q110 370 130 405 Q165 390 180 430 Q220 440 240 480 Q300 500 330 560 L345 611 H70 Z" fill="#a9d6ee"/>
<path d="M70 420 Q120 430 150 470 Q210 500 250 560 L270 611 H70 Z" fill="#cfe8f6"/>
<path d="M480 520 Q510 470 560 480 Q600 450 626 470 V611 H440 Z" fill="#b9def2"/>
<path d="M150 140 Q200 80 270 70 L300 62 Q330 80 355 95 L330 140 Q290 160 250 130 Q200 160 150 140 Z" fill="#f1d9d6"/>
<path d="M255 110 Q290 70 345 90 L320 125 Z" fill="#2e5fa0"/>
<path d="M405 70 Q470 75 520 150 L530 175 L500 180 L505 215 L470 205 L440 225 L420 140 Z" fill="#f7b877"/>
<path d="M348 175 Q360 120 410 110 L455 200 Q440 235 400 240 Q365 235 348 175 Z" fill="#f3cba8"/>
<path d="M395 100 L420 95 L470 215 L450 225 Z" fill="#2b4a80"/>
<path d="M320 270 Q380 235 450 262 L470 290 L400 300 L330 295 Z" fill="#2d4f8a"/>
<path d="M380 240 L440 235 L430 265 L385 268 Z" fill="#f4f0ee"/>
<path d="M228 270 Q250 250 275 275 L315 310 L330 285 L465 280 Q490 330 470 390 L440 420 L420 470 L440 590 L385 611 L350 540 L320 420 L310 350 L270 335 Z" fill="#f0874a"/>
<path d="M228 265 Q255 250 275 280 L255 300 Z" fill="#f4c3a4"/>
<path d="M350 365 Q380 345 410 372 L395 395 L360 392 Z" fill="#f5c8a8"/>
<path d="M312 398 L440 405 L436 420 L314 415 Z" fill="#2b4a80"/>
<path d="M330 490 h18 v22 h-18 Z" fill="#eeeeee"/>
</g></svg></div>
    <div class="nb"><svg style="left:3.6px;top:3px" width="11" height="12" viewBox="0 0 11 12"><rect x="3" y="0" width="5" height="7.6" rx="2.5" fill="#e6e6e8"/><path d="M1.1 4.6 Q1.1 9.2 5.5 9.2 Q9.9 9.2 9.9 4.6" fill="none" stroke="#e6e6e8" stroke-width="1.3"/><path d="M5.5 9.2 V11.4" stroke="#e6e6e8" stroke-width="1.5"/><path d="M.8 10.8 L10.2 1.2" stroke="#d8463a" stroke-width="1.5"/></svg><span style="left:18px">李宗泽</span></div>
  </div>
  <div class="tile" style="top:451.00px">
    <div class="av"><svg viewBox="70 55 556 556" width="57" height="57" style="display:block"><defs><linearGradient id="fg" gradientUnits="userSpaceOnUse" x1="240" y1="60" x2="520" y2="600">
<stop offset="0" stop-color="#8a6a50"/><stop offset=".08" stop-color="#e07a35"/><stop offset=".16" stop-color="#f3a24f"/><stop offset=".22" stop-color="#c58552"/><stop offset=".3" stop-color="#e9b57e"/><stop offset=".38" stop-color="#b3794e"/><stop offset=".5" stop-color="#c98a55"/><stop offset=".6" stop-color="#f7dc8a"/><stop offset=".66" stop-color="#fdf3c0"/><stop offset=".72" stop-color="#e8a64a"/><stop offset=".8" stop-color="#d9853a"/><stop offset=".88" stop-color="#f2c565"/><stop offset="1" stop-color="#b26c3a"/></linearGradient><filter id="b5"><feGaussianBlur stdDeviation="3"/></filter></defs>
<rect x="70" y="55" width="556" height="556" fill="url(#fg)"/>
<g filter="url(#b5)">
<path d="M70 320 Q100 280 140 300 L120 420 L70 440 Z" fill="#f2b04c"/>
<path d="M70 400 Q110 380 130 430 L100 520 L70 520 Z" fill="#f7df8c"/>
<path d="M330 500 Q450 470 626 420 V470 Q470 520 330 545 Z" fill="#fbe9a6"/>
<path d="M300 200 Q420 170 520 120 L540 140 Q430 200 310 225 Z" fill="#e8b98c"/>
<path d="M135 250 Q160 215 215 222 L275 235 Q330 250 340 290 L395 320 Q410 380 385 440 L330 480 L290 520 L262 540 L235 600 L165 585 L175 470 Q140 410 140 340 Z" fill="#9a6a48"/>
<path d="M140 255 Q165 220 215 226 L268 240 Q300 262 290 300 Q240 330 190 305 Q150 295 140 255 Z" fill="#dba97f"/>
<path d="M150 330 Q200 345 250 330 L262 370 Q220 395 165 380 Z" fill="#b98560"/>
<path d="M365 285 Q400 245 460 250 Q490 270 488 320 L470 400 Q440 440 400 430 Q420 360 395 320 Z" fill="#e3b48b"/>
<path d="M440 290 Q470 300 465 340 M430 340 Q455 350 450 385" stroke="#8b5c3d" stroke-width="7" fill="none"/>
<path d="M165 470 L215 450 L240 520 L230 600 L165 585 Z" fill="#d9a67a"/>
<path d="M235 560 Q330 530 420 545 L410 600 L240 605 Z" fill="#8c8a78"/>
<path d="M280 572 Q340 560 400 570" stroke="#e8e6c8" stroke-width="8" fill="none"/>
</g></svg></div>
    <div class="nb"><svg style="left:3.6px;top:3px" width="11" height="12" viewBox="0 0 11 12"><rect x="3" y="0" width="5" height="7.6" rx="2.5" fill="#e6e6e8"/><path d="M1.1 4.6 Q1.1 9.2 5.5 9.2 Q9.9 9.2 9.9 4.6" fill="none" stroke="#e6e6e8" stroke-width="1.3"/><path d="M5.5 9.2 V11.4" stroke="#e6e6e8" stroke-width="1.5"/><path d="M.8 10.8 L10.2 1.2" stroke="#d8463a" stroke-width="1.5"/></svg><span style="left:18px">王浩</span></div>
  </div>
  <div class="abs" style="left:57.4px;top:540px;width:86.2px;height:23.4px;background:linear-gradient(#151618 0,#151618 4.6px,#0c0c0e 4.6px,#0c0c0e 100%)"></div>
  <svg class="abs" style="left:95.5px;top:548px" width="11" height="7" viewBox="0 0 11 7" fill="none" stroke="#fff" stroke-width="1.3" stroke-linecap="round" stroke-linejoin="round"><path d="M1 1 L5.5 5.5 L10 1"/></svg>
</div>
<svg class="abs" style="left:937px;top:337px" width="7" height="10" viewBox="0 0 7 10" fill="none" stroke="#fff" stroke-width="1.3" stroke-linecap="round" stroke-linejoin="round"><path d="M1 .8 L5.6 5 L1 9.2"/></svg>
</body>
</html>
